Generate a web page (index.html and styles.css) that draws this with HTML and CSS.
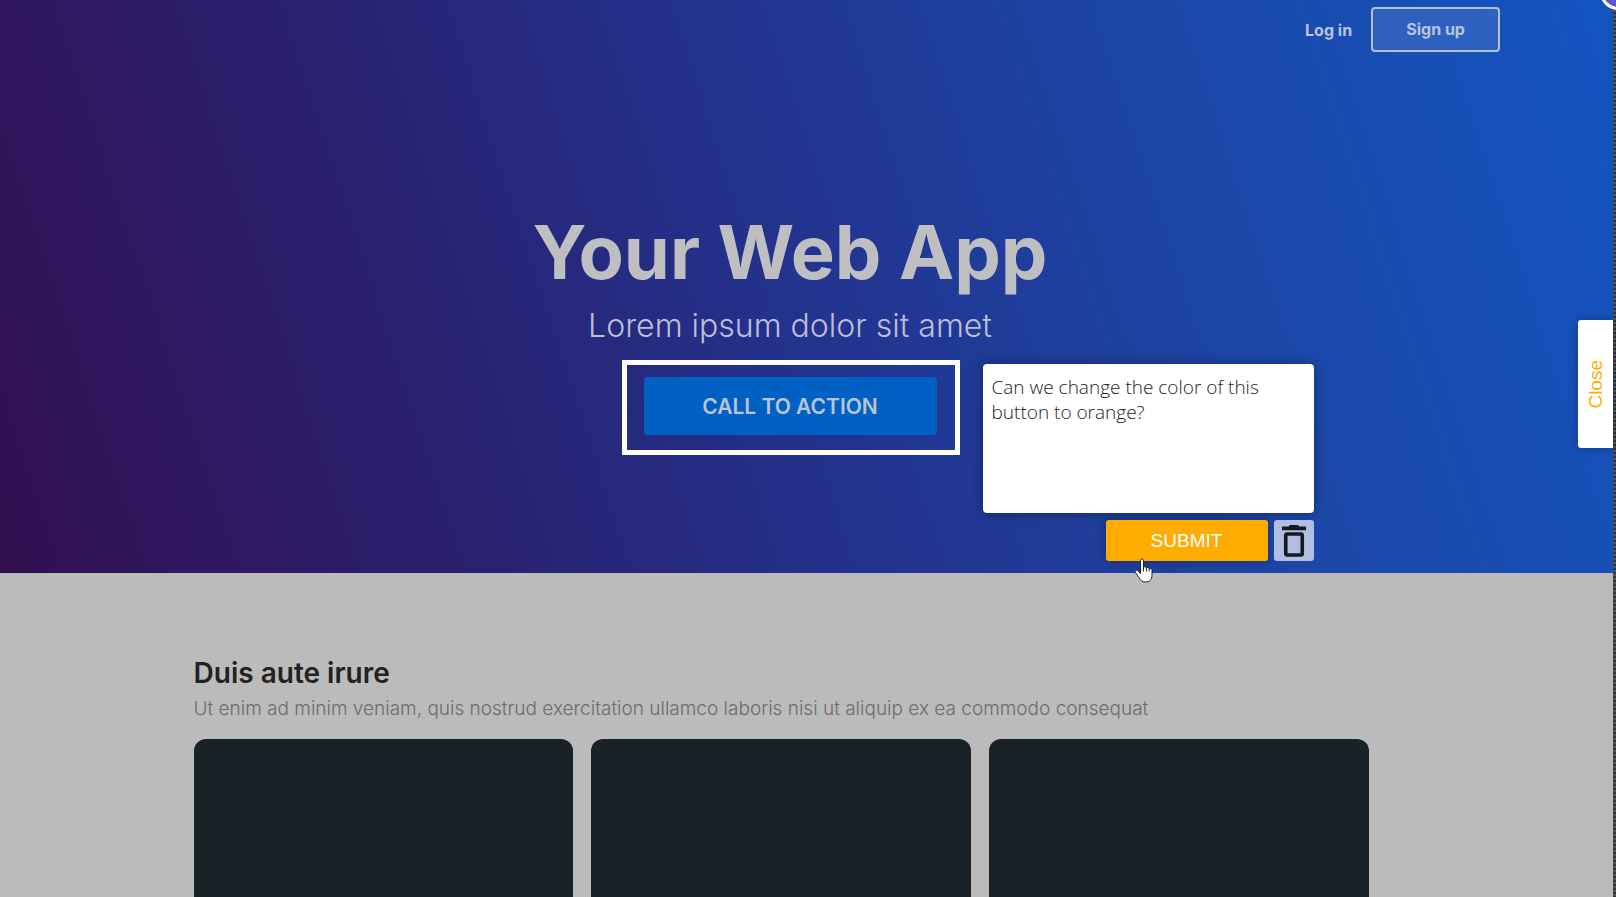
FILE: index.html
```html
<!DOCTYPE html>
<html lang="en">
<head>
	<meta charset="utf-8">
	<meta name="viewport" content="width=device-width, initial-scale=1.0">
	<title>Your Web App</title>
	<link rel="stylesheet" href="styles.css">
</head>
<body>
	<div class="page">
		<header class="hero">
			<nav class="navbar">
				<a class="login" href="#">Log in</a>
				<a class="signup" href="#">Sign up</a>
			</nav>
			<div class="hero-content">
				<h1>Your Web App</h1>
				<p>Lorem ipsum dolor sit amet</p>
				<div class="cta-wrap">
					<button class="cta" type="button">CALL TO ACTION</button>
					<div class="highlight"></div>
					<!-- comment popup -->
					<form class="comment">
						<textarea aria-label="Comment" spellcheck="false">Can we change the color of this button to orange?</textarea>
						<div class="comment-actions">
							<button class="submit" type="button">SUBMIT</button>
							<button class="delete" type="button" aria-label="Delete">
								<svg width="24" height="32" viewBox="0 0 24 32">
									<path d="M0 1.500h6.500l1.500-1.500h8l1.500 1.500h6.500v3.800H0z" fill="#16191f"/>
									<rect x="3.750" y="9" width="16.500" height="21" rx="1.500" fill="none" stroke="#16191f" stroke-width="3.600"/>
								</svg>
							</button>
						</div>
						<svg class="cursor" width="20" height="26" viewBox="0 0 20 26">
							<path d="M6.500 2.500c0-2 3-2 3 0v7c.5-1.300 2.700-1.100 2.900.5.700-1 2.600-.8 2.800.8.900-.8 2.800-.3 2.800 1.400v5.300c0 4-2.500 6.500-6.500 6.500-3.500 0-5-1.500-6.500-4.500L1.400 14.500c-.9-1.800 1.300-3 2.700-1.500l2.400 2.600z" fill="#fff" stroke="#222" stroke-width="1"/>
							<path d="M9.500 9.500v4M12.400 10v3.500M15.200 11v2.500" stroke="#222" stroke-width="1" fill="none"/>
						</svg>
					</form>
				</div>
			</div>
		</header>
		<main class="section">
			<h2>Duis aute irure</h2>
			<p>Ut enim ad minim veniam, quis nostrud exercitation ullamco laboris nisi ut aliquip ex ea commodo consequat</p>
			<div class="cards">
				<div class="card"></div>
				<div class="card"></div>
				<div class="card"></div>
			</div>
		</main>
		<button class="close-tab" type="button"><span>Close</span></button>
	</div>
	<div class="edge"></div>
	<div class="bubble"></div>
</body>
</html>
```

FILE: styles.css
```css
* {
	margin: 0;
	padding: 0;
	box-sizing: border-box;
}
body {
	display: flex;
	position: relative;
	height: 100vh;
	overflow: hidden;
	background-color: #bbb;
	font-family: Inter, sans-serif;
}
.page {
	display: flex;
	flex-direction: column;
	flex: auto;
	position: relative;
}
.edge {
	flex: none;
	width: 3px;
	background: repeating-linear-gradient(#30363c 0 2px, #50565c 2px 4px);
}
.bubble {
	position: absolute;
	top: -26px;
	right: -20px;
	width: 36px;
	height: 36px;
	border: 3px solid #fff;
	border-radius: 50%;
	background-color: #5b56d8;
}

/* hero */
.hero {
	flex: none;
	padding-bottom: 138px;
	background: linear-gradient(72deg, #310f50 0%, #30165d 10%, #29216f 27%, #23328c 48%, #1c47a8 74%, #1455c2 100%);
	color: #bfbfc2;
}
.navbar {
	display: flex;
	justify-content: flex-end;
	align-items: center;
	gap: 19px;
	padding: 7px 7% 0 0;
}
.navbar a {
	color: #b9c4e2;
	font-size: 16px;
	font-weight: 700;
	text-decoration: none;
}
.navbar .signup {
	width: 129px;
	border: 2px solid #b4c0e2;
	border-radius: 4px;
	background-color: rgba(255, 255, 255, 0.1);
	line-height: 41px;
	text-align: center;
}
.hero-content {
	display: flex;
	flex-direction: column;
	align-items: center;
	padding: 155px 33px 0 0;
}
.hero-content h1 {
	font-size: 74px;
	font-weight: 700;
	line-height: 90px;
}
.hero-content p {
	margin: 8px 0 30px;
	color: #bcbfd8;
	font-size: 32px;
	font-weight: 300;
	line-height: 42px;
}
.cta-wrap {
	position: relative;
}
.cta {
	width: 293px;
	height: 58px;
	border: none;
	border-radius: 3px;
	background-color: #0060c4;
	color: #b9c4d6;
	font-family: inherit;
	font-size: 21px;
	font-weight: 600;
}
.highlight {
	position: absolute;
	inset: -17px -23px -20px -22px;
	border: 5px solid #fff;
}

/* comment popup */
.comment {
	display: flex;
	flex-direction: column;
	gap: 7px;
	position: absolute;
	top: -13px;
	left: 339px;
	width: 331px;
}
.comment textarea {
	height: 149px;
	padding: 11px 9px;
	border: none;
	border-radius: 4px;
	background-color: #fff;
	box-shadow: 0 0 12px rgba(0, 0, 0, 0.35);
	color: #222;
	font-family: "Open Sans", sans-serif;
	font-size: 19px;
	font-weight: 300;
	line-height: 25px;
	resize: none;
}
.comment-actions {
	display: flex;
	justify-content: flex-end;
	gap: 6px;
}
.comment-actions button {
	height: 41px;
	border: none;
	border-radius: 3px;
}
.comment-actions .submit {
	width: 162px;
	background-color: #ffab00;
	box-shadow: 0 0 10px rgba(0, 0, 0, 0.3);
	color: #fff;
	font-family: "Liberation Sans", sans-serif;
	font-size: 19px;
}
.comment-actions .delete {
	display: flex;
	justify-content: center;
	align-items: center;
	width: 40px;
	background-color: #b1bde3;
}
.cursor {
	position: absolute;
	top: 194px;
	left: 151px;
}

/* content */
.section {
	display: flex;
	flex-direction: column;
	flex: auto;
	padding: 82px 244px 0 12%;
}
.section h2 {
	color: #222;
	font-size: 28px;
	font-weight: 600;
	line-height: 36px;
}
.section p {
	margin: 4px 0 16px;
	color: #6c6c6c;
	font-size: 19px;
	font-weight: 300;
	line-height: 28px;
}
.cards {
	display: grid;
	grid-template-columns: repeat(3, 1fr);
	gap: 18px;
	flex: auto;
}
.card {
	border-radius: 12px 12px 0 0;
	background-color: #192227;
}

.close-tab {
	display: flex;
	justify-content: center;
	align-items: center;
	position: absolute;
	top: 320px;
	right: 0;
	width: 35px;
	height: 128px;
	border: none;
	border-radius: 3px 0 0 3px;
	background-color: #fff;
	box-shadow: 0 0 10px rgba(0, 0, 0, 0.3);
	color: #ffab00;
	font-family: "Liberation Sans", sans-serif;
	font-size: 19px;
}
.close-tab span {
	writing-mode: vertical-rl;
	transform: rotate(180deg);
}
```
